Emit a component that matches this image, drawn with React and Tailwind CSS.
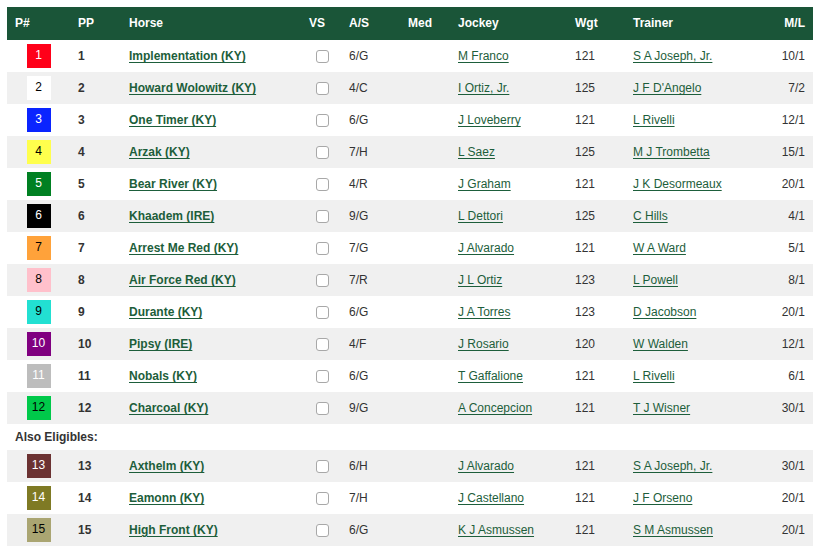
import React from "react";

const starters = [
  { p: 1, horse: "Implementation (KY)", as: "6/G", jockey: "M Franco", wgt: 121, trainer: "S A Joseph, Jr.", ml: "10/1", bg: "bg-[#ff0019]", fg: "text-white" },
  { p: 2, horse: "Howard Wolowitz (KY)", as: "4/C", jockey: "I Ortiz, Jr.", wgt: 125, trainer: "J F D'Angelo", ml: "7/2", bg: "bg-white", fg: "text-black" },
  { p: 3, horse: "One Timer (KY)", as: "6/G", jockey: "J Loveberry", wgt: 121, trainer: "L Rivelli", ml: "12/1", bg: "bg-[#0a24ff]", fg: "text-white" },
  { p: 4, horse: "Arzak (KY)", as: "7/H", jockey: "L Saez", wgt: 125, trainer: "M J Trombetta", ml: "15/1", bg: "bg-[#ffff4d]", fg: "text-black" },
  { p: 5, horse: "Bear River (KY)", as: "4/R", jockey: "J Graham", wgt: 121, trainer: "J K Desormeaux", ml: "20/1", bg: "bg-[#008022]", fg: "text-white" },
  { p: 6, horse: "Khaadem (IRE)", as: "9/G", jockey: "L Dettori", wgt: 125, trainer: "C Hills", ml: "4/1", bg: "bg-black", fg: "text-white" },
  { p: 7, horse: "Arrest Me Red (KY)", as: "7/G", jockey: "J Alvarado", wgt: 121, trainer: "W A Ward", ml: "5/1", bg: "bg-[#ffa23a]", fg: "text-black" },
  { p: 8, horse: "Air Force Red (KY)", as: "7/R", jockey: "J L Ortiz", wgt: 123, trainer: "L Powell", ml: "8/1", bg: "bg-[#ffc0cb]", fg: "text-black" },
  { p: 9, horse: "Durante (KY)", as: "6/G", jockey: "J A Torres", wgt: 123, trainer: "D Jacobson", ml: "20/1", bg: "bg-[#22e0d2]", fg: "text-black" },
  { p: 10, horse: "Pipsy (IRE)", as: "4/F", jockey: "J Rosario", wgt: 120, trainer: "W Walden", ml: "12/1", bg: "bg-[#800080]", fg: "text-white" },
  { p: 11, horse: "Nobals (KY)", as: "6/G", jockey: "T Gaffalione", wgt: 121, trainer: "L Rivelli", ml: "6/1", bg: "bg-[#bdbdbd]", fg: "text-white" },
  { p: 12, horse: "Charcoal (KY)", as: "9/G", jockey: "A Concepcion", wgt: 121, trainer: "T J Wisner", ml: "30/1", bg: "bg-[#00c94a]", fg: "text-black" },
];

const eligibles = [
  { p: 13, horse: "Axthelm (KY)", as: "6/H", jockey: "J Alvarado", wgt: 121, trainer: "S A Joseph, Jr.", ml: "30/1", bg: "bg-[#6b3232]", fg: "text-white" },
  { p: 14, horse: "Eamonn (KY)", as: "7/H", jockey: "J Castellano", wgt: 121, trainer: "J F Orseno", ml: "20/1", bg: "bg-[#7f7a24]", fg: "text-white" },
  { p: 15, horse: "High Front (KY)", as: "6/G", jockey: "K J Asmussen", wgt: 121, trainer: "S M Asmussen", ml: "20/1", bg: "bg-[#aaa572]", fg: "text-black" },
];

const Row = ({ r, gray }) => (
  <tr className={`h-[32px] ${gray ? "bg-[#f0f0f0]" : "bg-white"}`}>
    <td className="px-2">
      <div className={`mx-auto w-[24px] h-[24px] flex items-center justify-center pb-[2px] ${r.bg} ${r.fg}`}>{r.p}</div>
    </td>
    <td className="px-2 font-bold">{r.p}</td>
    <td className="px-2">
      <a href="#" className="font-bold text-[#1d5e3b] underline underline-offset-2">{r.horse}</a>
    </td>
    <td className="px-2">
      <span className="block ml-[7px] w-[13px] h-[13px] border border-[#a8a8a8] rounded-[3px] bg-white"></span>
    </td>
    <td className="px-2">{r.as}</td>
    <td className="px-2"></td>
    <td className="px-2">
      <a href="#" className="text-[#1d5e3b] underline underline-offset-2">{r.jockey}</a>
    </td>
    <td className="px-2">{r.wgt}</td>
    <td className="px-2">
      <a href="#" className="text-[#1d5e3b] underline underline-offset-2">{r.trainer}</a>
    </td>
    <td className="px-2 text-right">{r.ml}</td>
  </tr>
);

const App = () => {
  return (
    <div className="w-[825px] h-[557px] bg-white p-[7px] font-['Liberation_Sans',Arial,sans-serif] text-[12px] text-[#333]">
      <table className="w-[806px] table-fixed border-collapse">
        <colgroup>
          <col className="w-[63px]" />
          <col className="w-[51px]" />
          <col className="w-[180px]" />
          <col className="w-[40px]" />
          <col className="w-[59px]" />
          <col className="w-[50px]" />
          <col className="w-[117px]" />
          <col className="w-[58px]" />
          <col className="w-[142px]" />
          <col className="w-[46px]" />
        </colgroup>
        <thead>
          <tr className="h-[33px] bg-[#1a5538] text-white font-bold text-left">
            <th className="px-2 pb-[2px]">P#</th>
            <th className="px-2 pb-[2px]">PP</th>
            <th className="px-2 pb-[2px]">Horse</th>
            <th className="px-2 pb-[2px]">VS</th>
            <th className="px-2 pb-[2px]">A/S</th>
            <th className="px-2 pb-[2px]">Med</th>
            <th className="px-2 pb-[2px]">Jockey</th>
            <th className="px-2 pb-[2px]">Wgt</th>
            <th className="px-2 pb-[2px]">Trainer</th>
            <th className="px-2 pb-[2px] text-right">M/L</th>
          </tr>
        </thead>
        <tbody>
          {starters.map((r, i) => (
            <Row key={r.p} r={r} gray={i % 2 === 1} />
          ))}
          <tr className="h-[26px] bg-white">
            <td colSpan={10} className="px-2 font-bold">Also Eligibles:</td>
          </tr>
          {eligibles.map((r, i) => (
            <Row key={r.p} r={r} gray={i % 2 === 0} />
          ))}
        </tbody>
      </table>
    </div>
  );
};

export default App;
